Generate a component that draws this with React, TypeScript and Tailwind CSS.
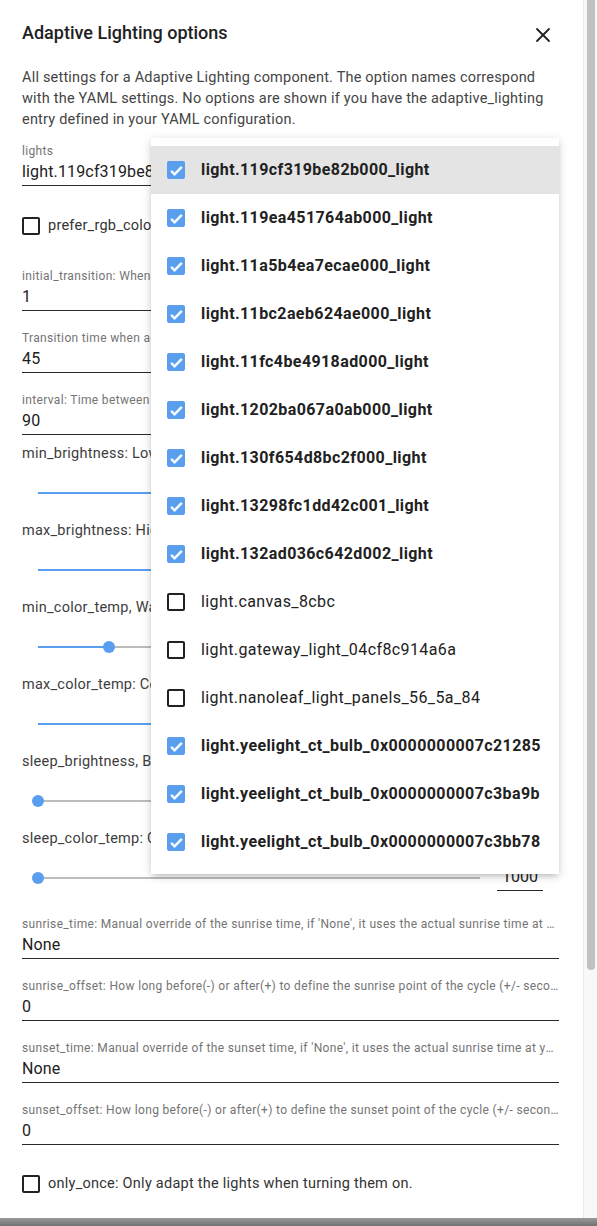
import { X } from "lucide-react";

type Light = { id: string; checked: boolean };

const lights: Light[] = [
  { id: "light.119cf319be82b000_light", checked: true },
  { id: "light.119ea451764ab000_light", checked: true },
  { id: "light.11a5b4ea7ecae000_light", checked: true },
  { id: "light.11bc2aeb624ae000_light", checked: true },
  { id: "light.11fc4be4918ad000_light", checked: true },
  { id: "light.1202ba067a0ab000_light", checked: true },
  { id: "light.130f654d8bc2f000_light", checked: true },
  { id: "light.13298fc1dd42c001_light", checked: true },
  { id: "light.132ad036c642d002_light", checked: true },
  { id: "light.canvas_8cbc", checked: false },
  { id: "light.gateway_light_04cf8c914a6a", checked: false },
  { id: "light.nanoleaf_light_panels_56_5a_84", checked: false },
  { id: "light.yeelight_ct_bulb_0x0000000007c21285", checked: true },
  { id: "light.yeelight_ct_bulb_0x0000000007c3ba9b", checked: true },
  { id: "light.yeelight_ct_bulb_0x0000000007c3bb78", checked: true },
];

const sliders = [
  { label: "min_brightness: Lowest brightness (%) of the lights", frac: 0.62, value: "1" },
  { label: "max_brightness: Highest brightness (%) of the lights", frac: 1, value: "100" },
  { label: "min_color_temp, Warmest color temperature (K)", frac: 0.16, value: "2500" },
  { label: "max_color_temp: Coldest color temperature (K)", frac: 0.5, value: "5500" },
  { label: "sleep_brightness, Brightness of lights in sleep mode (%)", frac: 0, value: "1" },
  { label: "sleep_color_temp: Color temperature in sleep mode (K)", frac: 0, value: "1000" },
];

function CheckBox({ checked }: { checked: boolean }) {
  if (checked) {
    return (
      <div className="flex h-[18px] w-[18px] shrink-0 items-center justify-center rounded-[2px] bg-[#5a9fef]">
        <svg viewBox="0 0 24 24" className="h-[17px] w-[17px]" fill="none">
          <path d="M4.5 12.5l4.8 4.8L19.5 7" stroke="white" strokeWidth="3.4" />
        </svg>
      </div>
    );
  }
  return <div className="h-[18px] w-[18px] shrink-0 rounded-[2px] border-2 border-[#222]" />;
}

function Field({ label, value, className = "" }: { label: string; value: string; className?: string }) {
  return (
    <div className={className}>
      <div className="h-[14px] truncate text-[12px] leading-[14px] tracking-[0.34px] text-[#747474]">{label}</div>
      <div className="h-[28px] truncate border-b border-[#2a2a2a] text-[16px] leading-[27px] tracking-[0.15px] text-[#212121]">
        {value}
      </div>
    </div>
  );
}

function SliderRow({ label, frac, value }: { label: string; frac: number; value: string }) {
  return (
    <div className="h-[77px]">
      <div className="h-[20px] truncate text-[14.5px] leading-[20px] tracking-[0.25px] text-[#3d3d3d]">{label}</div>
      <div className="flex h-[57px] items-center px-[16px]">
        <div className="relative h-[2px] flex-1 bg-[#bdbdbd]">
          <div className="absolute left-0 top-0 h-full bg-[#5a9fef]" style={{ width: `${frac * 100}%` }} />
          <div
            className="absolute top-1/2 h-[12px] w-[12px] -translate-x-1/2 -translate-y-1/2 rounded-full bg-[#5a9fef]"
            style={{ left: `${frac * 100}%` }}
          />
        </div>
        <div className="ml-[17px] h-[26px] w-[46px] border-b border-[#2a2a2a] text-center text-[16px] leading-[24px] text-[#212121]">
          {value}
        </div>
      </div>
    </div>
  );
}

export default function App() {
  return (
    <div className="flex h-[1226px] w-full flex-col overflow-hidden bg-white font-['Roboto',sans-serif]">
      <div className="flex h-[1218px] min-h-0">
        <div className="relative min-w-0 flex-1 overflow-hidden pl-[22px] pr-[24px]">
          <div className="flex items-start justify-between pt-[21px]">
            <h2 className="text-[18px] font-medium leading-[24px] text-[#212121]">Adaptive Lighting options</h2>
            <X className="mr-[4px] mt-[2px] h-[24px] w-[24px] shrink-0 text-[#212121]" strokeWidth={1.8} />
          </div>

          <p className="mt-[20px] text-[14.5px] leading-[21px] tracking-[0.2px] text-[#444]">
            All settings for a Adaptive Lighting component. The option names correspond with the YAML settings. No
            options are shown if you have the adaptive_lighting entry defined in your YAML configuration.
          </p>

          <Field
            className="mt-[14px]"
            label="lights"
            value={lights.filter((l) => l.checked).map((l) => l.id).join(", ")}
          />

          <label className="mt-[30px] flex h-[20px] items-center gap-[8px] text-[14.5px] tracking-[0.25px] text-[#333]">
            <CheckBox checked={false} />
            <span className="truncate">prefer_rgb_color: Use 'rgb_color' rather than 'color_temp' when possible.</span>
          </label>

          <Field
            className="mt-[33px]"
            label="initial_transition: When lights go 'off' to 'on' or 'on' to 'off' (seconds)"
            value="1"
          />
          <Field
            className="mt-[20px]"
            label="Transition time when adapting the lights (seconds)"
            value="45"
          />
          <Field
            className="mt-[20px]"
            label="interval: Time between updates (seconds)"
            value="90"
          />

          <div className="mt-[9px]">
            {sliders.map((s) => (
              <SliderRow key={s.label} label={s.label} frac={s.frac} value={s.value} />
            ))}
          </div>

          <Field
            className="mt-[11px]"
            label="sunrise_time: Manual override of the sunrise time, if 'None', it uses the actual sunrise time at your location (HH:MM:SS format)"
            value="None"
          />
          <Field
            className="mt-[20px]"
            label="sunrise_offset: How long before(-) or after(+) to define the sunrise point of the cycle (+/- seconds)"
            value="0"
          />
          <Field
            className="mt-[20px]"
            label="sunset_time: Manual override of the sunset time, if 'None', it uses the actual sunrise time at your location (HH:MM:SS format)"
            value="None"
          />
          <Field
            className="mt-[20px]"
            label="sunset_offset: How long before(-) or after(+) to define the sunset point of the cycle (+/- seconds)"
            value="0"
          />

          <label className="mt-[29px] flex h-[20px] items-center gap-[8px] text-[14.5px] tracking-[0.25px] text-[#333]">
            <CheckBox checked={false} />
            <span>only_once: Only adapt the lights when turning them on.</span>
          </label>

          {/* lights dropdown menu */}
          <div className="absolute left-[151px] top-[138px] w-[408px] bg-white py-[8px] shadow-[0_3px_6px_-2px_rgba(0,0,0,0.25),0_2px_10px_1px_rgba(0,0,0,0.1)]">
            {lights.map((l, i) => (
              <div
                key={l.id}
                className={`flex h-[48px] items-center gap-[16px] pl-[16px] ${i === 0 ? "bg-[#e4e4e4]" : ""}`}
              >
                <CheckBox checked={l.checked} />
                <span
                  className={`whitespace-nowrap text-[16px] tracking-[0.4px] text-[#212121] ${l.checked ? "font-bold" : "font-normal"}`}
                >
                  {l.id}
                </span>
              </div>
            ))}
          </div>
        </div>

        <div className="w-[14px] shrink-0 border-l border-[#ebebeb] bg-[#f8f8f8] pl-[3px]">
          <div className="h-[970px] w-[8px] rounded-b-[4px] bg-[#c1c1c1]" />
        </div>
      </div>
      <div className="h-[8px] bg-gradient-to-b from-[#9a9a9a] to-[#727272]" />
    </div>
  );
}
